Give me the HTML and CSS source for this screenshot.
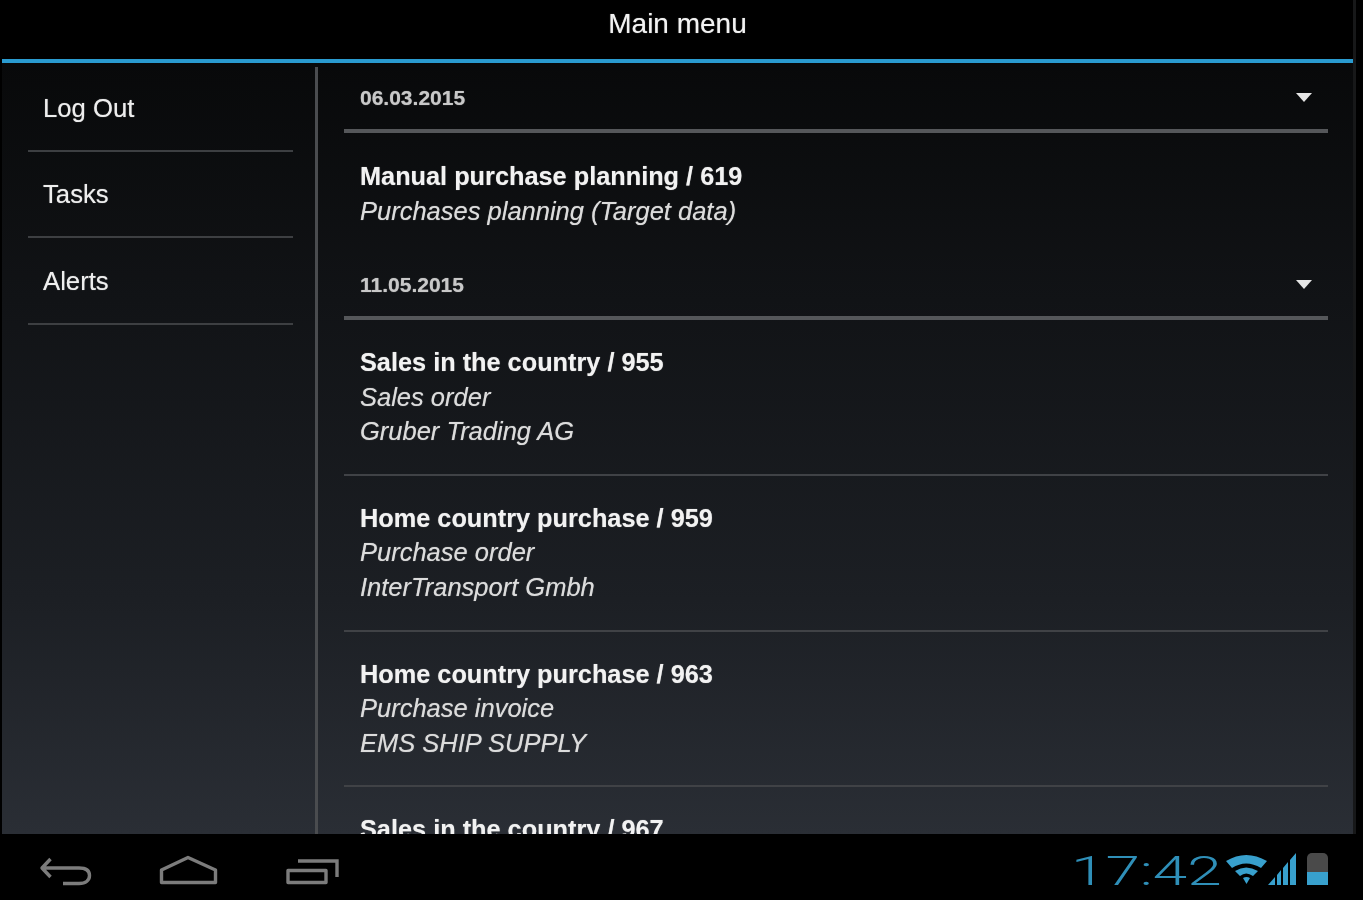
FILE: index.html
```html
<!DOCTYPE html>
<html lang="en">
<head>
<meta charset="utf-8">
<title>Main menu</title>
<link rel="stylesheet" href="styles.css">
</head>
<body>
<div class="screen">
  <div class="app">
    <header class="topbar"><h1 class="title">Main menu</h1></header>
    <div class="panes">
      <nav class="menu">
        <a class="menu-item">Log Out</a>
        <a class="menu-item">Tasks</a>
        <a class="menu-item">Alerts</a>
      </nav>
      <main class="list">
        <div class="date-row"><span>06.03.2015</span><i class="caret"></i></div>
        <div class="entry entry-short">
          <div class="entry-title">Manual purchase planning / 619</div>
          <div class="entry-sub">Purchases planning (Target data)</div>
        </div>
        <div class="date-row"><span>11.05.2015</span><i class="caret"></i></div>
        <div class="entry">
          <div class="entry-title">Sales in the country / 955</div>
          <div class="entry-sub">Sales order</div>
          <div class="entry-sub">Gruber Trading AG</div>
        </div>
        <div class="entry">
          <div class="entry-title">Home country purchase / 959</div>
          <div class="entry-sub">Purchase order</div>
          <div class="entry-sub">InterTransport Gmbh</div>
        </div>
        <div class="entry">
          <div class="entry-title">Home country purchase / 963</div>
          <div class="entry-sub">Purchase invoice</div>
          <div class="entry-sub">EMS SHIP SUPPLY</div>
        </div>
        <div class="entry">
          <div class="entry-title">Sales in the country / 967</div>
        </div>
      </main>
    </div>
  </div>
  <footer class="sysbar">
    <div class="softkeys">
      <svg width="56" height="34" viewBox="0 0 56 34"><path d="M12.500 4 4 13l8.500 9M4 13h37c7 0 10.500 3 10.500 7.500s-3.500 8-10.500 8H25" fill="none" stroke="#7c7c7c" stroke-width="3.400" stroke-linejoin="round"/></svg>
      <svg width="62" height="34" viewBox="0 0 62 34"><path d="M3.500 15 30 2.500 57.500 15v12.500H3.500z" fill="none" stroke="#7c7c7c" stroke-width="3.400" stroke-linejoin="round"/></svg>
      <svg width="56" height="34" viewBox="0 0 56 34"><path d="M4 15.500h38v12H4z" fill="none" stroke="#7c7c7c" stroke-width="3.400" stroke-linejoin="round"/><path d="M14 6h39v16" fill="none" stroke="#7c7c7c" stroke-width="3.400"/></svg>
    </div>
    <div class="status">
      <span class="clock"><span class="clock-digits">17:42</span></span>
      <svg width="41" height="33" viewBox="0 0 41 33"><path d="M0 8Q20-4 41 8L35 15Q20 6 6 15z" fill="#38a0cd"/><path d="M9 18Q20 11 32 18L27 23Q20 18 14 23z" fill="#38a0cd"/><path d="M17 25Q20.500 23 24 25L20.500 31z" fill="#38a0cd"/></svg>
      <svg width="31" height="33" viewBox="0 0 31 33"><path d="M1 32 8 24V32zM10 22 14 17V32H10zM16 15 21 9V32H16zM23 7 29 0V32H23z" fill="#38a0cd"/></svg>
      <div class="battery"><div class="battery-empty"></div><div class="battery-full"></div></div>
    </div>
  </footer>
</div>
</body>
</html>
```
FILE: styles.css
```css
* { box-sizing: border-box; }
html, body { margin: 0; height: 100%; background: #000; overflow: hidden; }
body { font-family: "Liberation Sans", Arial, sans-serif; }
.screen { width: 1363px; height: 900px; display: flex; flex-direction: column; filter: blur(0.7px); background: #000; }
.app { height: 834px; margin: 0 7px 0 2px; display: flex; flex-direction: column; overflow: hidden; border-right: 3px solid #171819; background: linear-gradient(#08090a 62px, #111316 300px, #1c1f24 600px, #2a2e35 834px); text-shadow: 0 0 1px rgba(255, 255, 255, 0.55); }
.topbar { height: 62.500px; flex: none; background: #000; border-bottom: 4px solid #2a9bd0; display: flex; justify-content: center; padding-top: 8px; }
.title { margin: 0; font-size: 28px; font-weight: 400; line-height: 32px; color: #f2f2f2; }
.panes { flex: 1; display: flex; min-height: 0; padding-top: 4.500px; }
.menu { width: 316px; flex: none; border-right: 3px solid #4a4c4f; padding: 0 22px 0 26px; }
.menu-item { display: flex; align-items: center; height: 86.600px; padding: 1.500px 0 0 15px; font-size: 25.700px; color: #eee; border-bottom: 2px solid #3d3f42; }
.menu-item:first-child { margin-top: -2px; }
.list { flex: 1; min-width: 0; padding: 0 25px 0 26px; overflow: hidden; }
.date-row { height: 66px; display: flex; justify-content: space-between; align-items: center; padding: 0 16px 1px; border-bottom: 4px solid #55575a; font-size: 21px; font-weight: 700; color: #c8c8c8; }
.caret { width: 0; height: 0; border: 8px solid transparent; border-top: 9px solid #e6e6e6; border-bottom: 0; }
.entry { height: 155.800px; padding: 25px 16px 0; border-bottom: 2px solid #404246; }
.entry-short { height: 121px; border-bottom: 0; padding-top: 26px; }
.entry-title { font-size: 25.300px; line-height: 34.500px; font-weight: 700; color: #f2f2f2; }
.entry-sub { font-size: 25.500px; line-height: 34.500px; font-style: italic; color: #dcdcdc; }
.sysbar { height: 66px; flex: none; background: #000; display: flex; justify-content: space-between; align-items: center; padding: 0 35px 0 38px; }
.softkeys { display: flex; gap: 64px; align-items: center; margin-top: 10px; }
.status { display: flex; align-items: center; margin-top: 4px; }
.clock { width: 148px; margin-right: 7px; display: block; white-space: nowrap; }
.clock-digits { display: inline-block; margin-top: 5px; font-family: Roboto, sans-serif; font-weight: 300; font-size: 40px; line-height: 34px; color: #2f8fb8; transform: scaleX(1.550); transform-origin: left center; }
.battery { width: 21px; height: 32px; margin-left: 9px; display: flex; flex-direction: column; }
.battery-empty { height: 19px; background: #4a4a4a; border-radius: 5px 5px 0 0; }
.battery-full { flex: 1; background: #38a0cd; }
```
